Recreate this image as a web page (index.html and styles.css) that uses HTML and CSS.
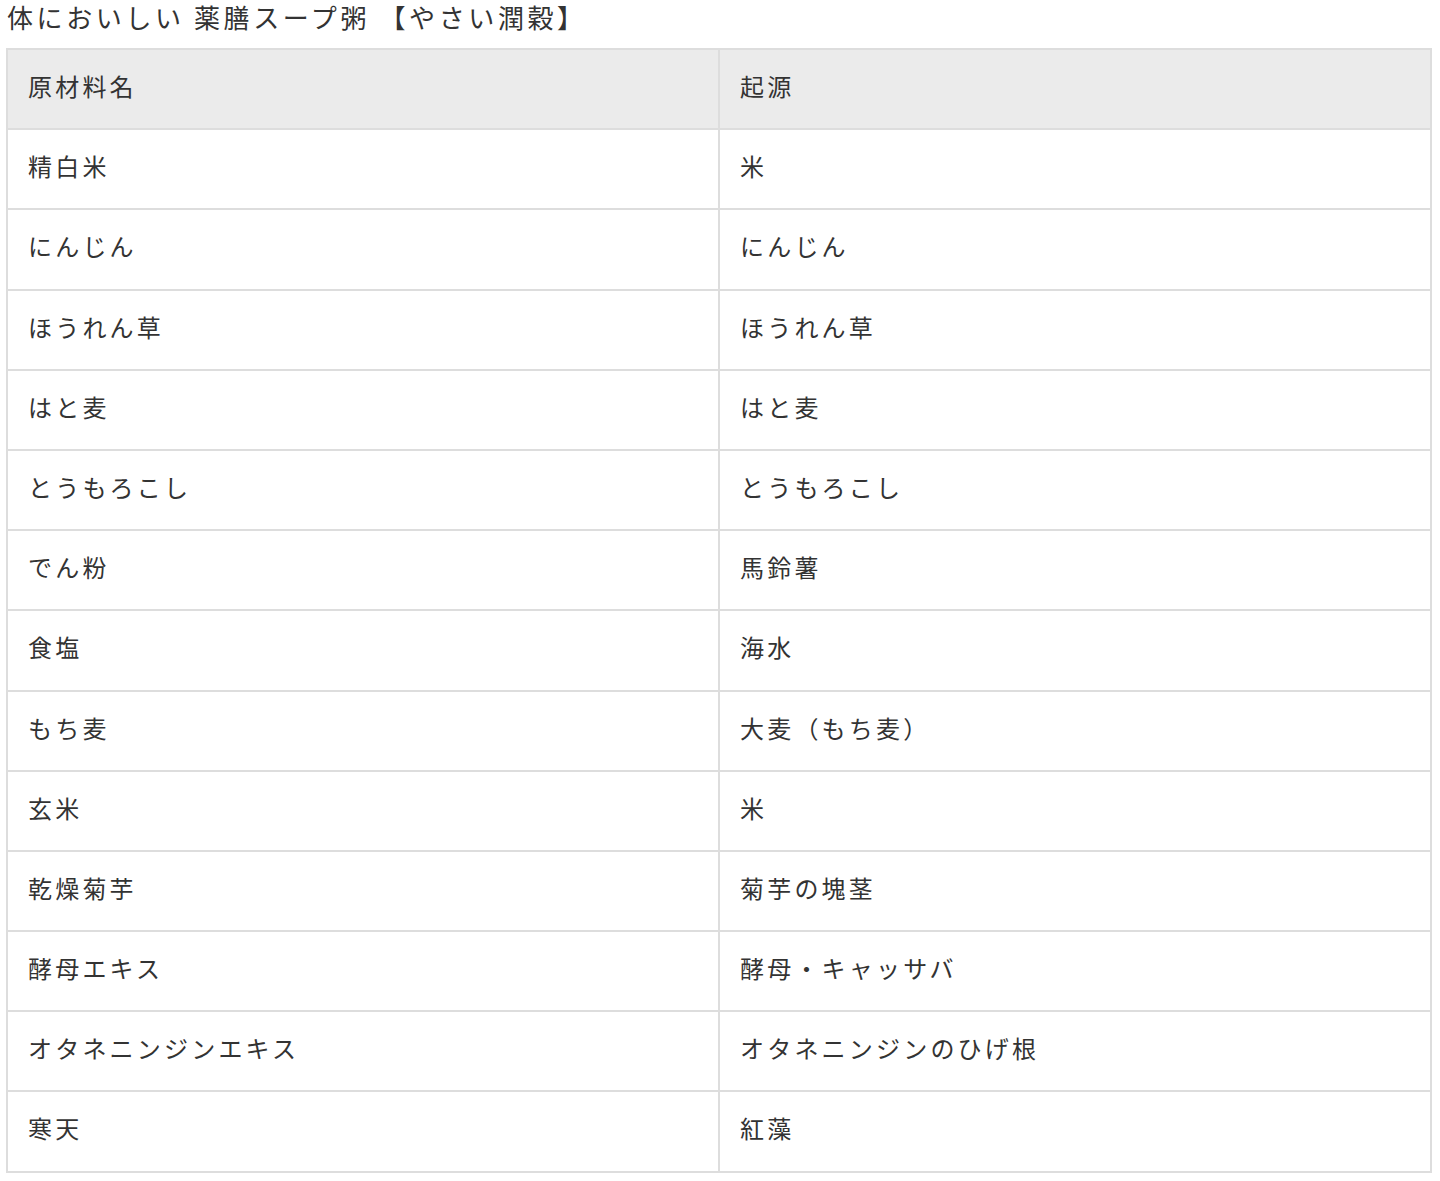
FILE: index.html
```html
<!DOCTYPE html>
<html lang="ja">
<head>
<meta charset="utf-8">
<title>体においしい 薬膳スープ粥 【やさい潤穀】</title>
<link rel="stylesheet" href="styles.css">
</head>
<body>
<h1 class="title">体においしい 薬膳スープ粥 【やさい潤穀】</h1>
<table class="ingredients">
<thead>
<tr><th>原材料名</th><th>起源</th></tr>
</thead>
<tbody>
<tr><td>精白米</td><td>米</td></tr>
<tr><td>にんじん</td><td>にんじん</td></tr>
<tr><td>ほうれん草</td><td>ほうれん草</td></tr>
<tr><td>はと麦</td><td>はと麦</td></tr>
<tr><td>とうもろこし</td><td>とうもろこし</td></tr>
<tr><td>でん粉</td><td>馬鈴薯</td></tr>
<tr><td>食塩</td><td>海水</td></tr>
<tr><td>もち麦</td><td>大麦（もち麦）</td></tr>
<tr><td>玄米</td><td>米</td></tr>
<tr><td>乾燥菊芋</td><td>菊芋の塊茎</td></tr>
<tr><td>酵母エキス</td><td>酵母・キャッサバ</td></tr>
<tr><td>オタネニンジンエキス</td><td>オタネニンジンのひげ根</td></tr>
<tr><td>寒天</td><td>紅藻</td></tr>
</tbody>
</table>
</body>
</html>
```
FILE: styles.css
```css
html, body {
  background: #ffffff;
}
body {
  margin: 0;
  padding: 0 8px 0 6px;
  font-family: "Noto Sans CJK JP", "Noto Sans", sans-serif;
  color: #333333;
}
.title {
  margin: 0 0 14px 1px;
  font-size: 26px;
  font-weight: 400;
  line-height: 34px;
  letter-spacing: 3.6px;
}
.ingredients {
  width: 100%;
  border-collapse: collapse;
  border: 2px solid #dddddd;
}
.ingredients th,
.ingredients td {
  width: 50%;
  border: 2px solid #dddddd;
  padding: 18px 20px 24.2px;
  font-size: 24px;
  font-weight: 400;
  line-height: 36px;
  letter-spacing: 3.2px;
  text-align: left;
  color: #333333;
}
.ingredients th {
  background: #ebebeb;
}
```
